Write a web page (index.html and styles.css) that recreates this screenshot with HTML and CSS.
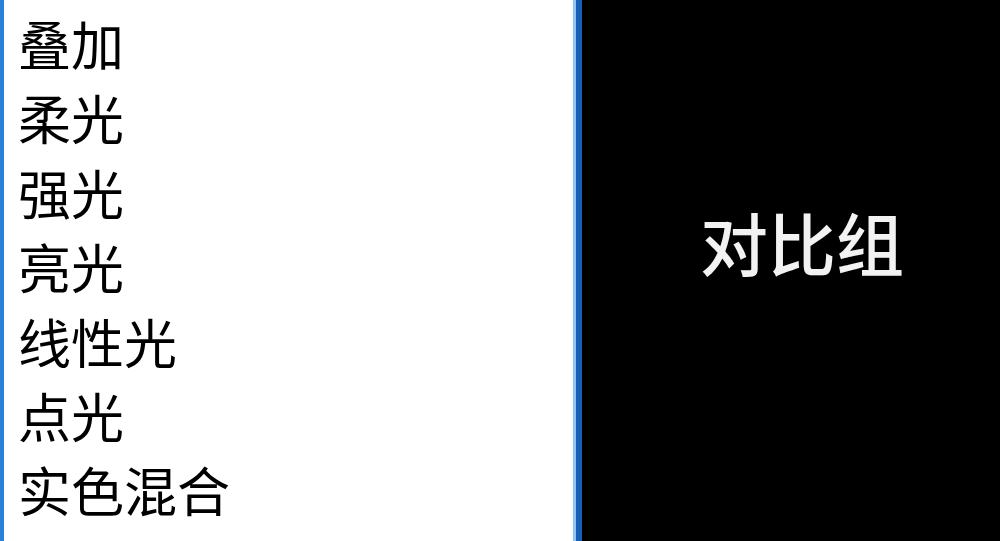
FILE: index.html
```html
<!DOCTYPE html>
<html lang="zh">
<head>
<meta charset="utf-8">
<link rel="stylesheet" href="styles.css">
</head>
<body>
<div class="page">
  <ul class="list">
    <li>叠加</li>
    <li>柔光</li>
    <li>强光</li>
    <li>亮光</li>
    <li>线性光</li>
    <li>点光</li>
    <li>实色混合</li>
  </ul>
  <div class="compare">
    <span class="compare-label">对比组</span>
  </div>
</div>
</body>
</html>
```
FILE: styles.css
```css
html, body {
  margin: 0;
  padding: 0;
  height: 100%;
  background: #000;
}
.page {
  display: flex;
  width: 1000px;
  height: 541px;
  overflow: hidden;
}
.list {
  margin: 0;
  padding: 6px 0 0 14px;
  list-style: none;
  width: 558px;
  background: #fff;
  border-left: 4px solid #2a7fd6;
  border-right: 6px solid #1660b8;
  box-shadow: inset -3px 0 0 #8fc6f2;
  font-family: "Noto Sans CJK SC", sans-serif;
  font-size: 53px;
  line-height: 74.4px;
  color: #000;
}
.list li {
  margin: 0;
  white-space: nowrap;
}
.compare {
  flex: 1;
  display: flex;
  align-items: center;
  justify-content: center;
  padding: 0 0 58px 22px;
  background: #000;
}
.compare-label {
  font-family: "Noto Sans CJK SC", sans-serif;
  font-weight: 500;
  font-size: 68px;
  color: #f2f2f2;
  line-height: 1;
}
```
